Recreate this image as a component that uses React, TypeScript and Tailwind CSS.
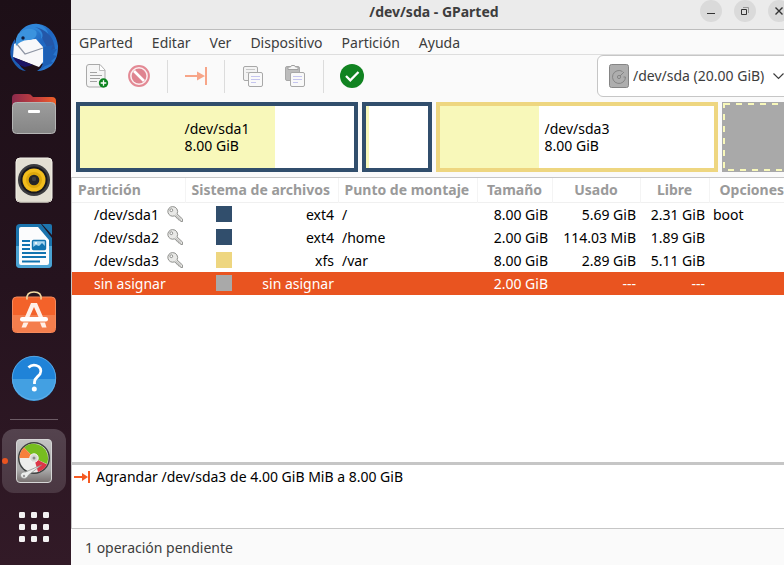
import React from "react";

/* ---------- Dock icons ---------- */

function ThunderbirdIcon() {
  return (
    <svg width="50" height="50" viewBox="0 0 50 50" aria-hidden="true">
      <defs>
        <linearGradient id="tb" x1="0" y1="0" x2="1" y2="1">
          <stop offset="0" stopColor="#3fa0e8" />
          <stop offset="0.5" stopColor="#1f66c0" />
          <stop offset="1" stopColor="#2c7fd6" />
        </linearGradient>
      </defs>
      <path d="M6 16C0 24 0 34 5 40c3 5 8 8 12 8-5-3-8-7-8-12z" fill="#1d5fb5" />
      <path
        d="M7 16C12 7 19 1 29 1c11 1 19 11 20 22 0 9-2 15-7 20-4 3-9 5-14 5 3-2 5-4 6-7L14 32 12 18z"
        fill="url(#tb)"
      />
      <path d="M29 1c-8-1-15 3-19 9 4-3 10-5 14-4 6 1 9 5 8 9l8 4c1-9-3-16-11-18z" fill="#2f86d9" />
      <path d="M26 4c10 2 19 9 20 22l-6 2-7-13c2-4-1-9-7-11z" fill="#2457a8" />
      <path d="M4 34l1-13 8-4 14-1 7 8v15l-4 5z" fill="#f8f8fa" />
      <path d="M4 34l20 8-8 2c-5-1-10-5-12-10z" fill="#1b1464" />
      <path d="M7 20l9 11 18-6" fill="none" stroke="#8f96a5" strokeWidth="1.2" />
      <path d="M9 11c5-5 13-7 18-3 2 4-1 8-6 9-5 0-10 1-14 6-1-4 0-8 2-12z" fill="#3b93de" />
      <path d="M35 24l9-2-2 5 6-1-4 6 4 1-6 5 2 2-8 3-5 4 4-8z" fill="#1d5fb5" />
      <circle cx="14" cy="15" r="1.7" fill="#111c3c" />
    </svg>
  );
}

function FilesIcon() {
  return (
    <svg width="46" height="42" viewBox="0 0 46 42" aria-hidden="true">
      <defs>
        <linearGradient id="fo" x1="0" x2="1">
          <stop offset="0" stopColor="#8b2a4c" />
          <stop offset="0.6" stopColor="#c9413c" />
          <stop offset="1" stopColor="#ee6127" />
        </linearGradient>
        <linearGradient id="fg" x1="0" y1="0" x2="0" y2="1">
          <stop offset="0" stopColor="#9d9d9d" />
          <stop offset="1" stopColor="#858585" />
        </linearGradient>
      </defs>
      <path d="M1 5q0-4 4-4h12q3 0 4 2l1 1h19q4 0 4 4v16H1z" fill="url(#fo)" />
      <rect x="1.5" y="9.5" width="43" height="31" rx="4" fill="url(#fg)" stroke="#b5b5b5" />
      <rect x="17" y="17" width="12" height="3" rx="1" fill="#fff" />
    </svg>
  );
}

function RhythmboxIcon() {
  return (
    <svg width="38" height="46" viewBox="0 0 38 46" aria-hidden="true">
      <rect x="1" y="1" width="36" height="44" rx="4" fill="#e3dfd3" stroke="#f4f2ea" />
      <path d="M2 43q1 2 4 2h26q3 0 4-2" fill="none" stroke="#c3bfb2" />
      <circle cx="19" cy="23" r="16" fill="#3c3c3f" />
      <circle cx="19" cy="23" r="13.5" fill="#17171d" />
      <circle cx="19" cy="23" r="11.5" fill="#f2bd1d" />
      <circle cx="19" cy="23" r="8" fill="#dda80c" />
      <circle cx="19" cy="23" r="5.3" fill="#252527" />
      <circle cx="19" cy="22" r="2.2" fill="#3e3e40" />
    </svg>
  );
}

function WriterIcon() {
  return (
    <svg width="38" height="46" viewBox="0 0 38 46" aria-hidden="true">
      <path d="M5 1h21l11 14v26q0 4-4 4H5q-4 0-4-4V5q0-4 4-4z" fill="#1b74ad" />
      <path d="M1 23h36v18q0 4-4 4H5q-4 0-4-4z" fill="#4ba3d3" />
      <path d="M6 4h17l11 13v23q0 2-2 2H6q-2 0-2-2V6q0-2 2-2z" fill="#fbfcfd" />
      <path d="M27 1h8q2 0 2 2v9z" fill="#1d75ae" />
      <path d="M7 18h8M7 22h8M7 26h8M7 30h24M7 34h24M7 38.5h18" stroke="#1274b0" strokeWidth="2" />
      <rect x="17.5" y="17.5" width="13" height="9" rx="1" fill="#a8d6f0" stroke="#1274b0" strokeWidth="1.4" />
      <path d="M18 26v-2l3-2 3 1 3-3 3 3v3z" fill="#1274b0" />
      <circle cx="21" cy="20" r="1" fill="#fff" />
    </svg>
  );
}

function SoftwareIcon() {
  return (
    <svg width="46" height="46" viewBox="0 0 46 46" aria-hidden="true">
      <rect x="1.5" y="8" width="43" height="35.5" rx="4" fill="#f3622a" stroke="#f58a5c" />
      <path d="M2 26h42v13q0 4-4 4H6q-4 0-4-4z" fill="#f47e4d" />
      <path d="M16 10.5q-1-7.500 7-7.500t7 7.500" fill="none" stroke="#f3dba3" strokeWidth="1.600" />
      <path d="M20 14h6l6 14h-4.500L23 18l-4.500 10H14z" fill="#fff0e8" />
      <rect x="9" y="28" width="28" height="4.500" rx="2.200" fill="#fff" />
      <path d="M12.500 33.500h5l-2.500 5h-4.500zM29 33.500h5l1.500 5h-4.500z" fill="#fff0e8" />
    </svg>
  );
}

function HelpIcon() {
  return (
    <svg width="46" height="46" viewBox="0 0 46 46" aria-hidden="true">
      <circle cx="23" cy="23" r="22" fill="#1f83d8" />
      <path d="M1 24a22 22 0 0 0 44 0z" fill="#43a0e2" />
      <circle cx="23" cy="23" r="21.7" fill="none" stroke="#65b1ea" strokeWidth="0.8" />
      <path
        d="M17.5 12.500c2-2 5-3 8-2 4 1.200 5.500 5 3.500 8.500-2 3-5.500 4-5.500 8v2"
        fill="none"
        stroke="#fff"
        strokeWidth="2.800"
      />
      <circle cx="23.300" cy="34" r="2.500" fill="#fff" />
    </svg>
  );
}

function GPartedIcon() {
  return (
    <svg width="38" height="46" viewBox="0 0 38 46" aria-hidden="true">
      <defs>
        <linearGradient id="gp" x1="0" y1="0" x2="0" y2="1">
          <stop offset="0" stopColor="#c4c4c4" />
          <stop offset="0.7" stopColor="#aaa" />
          <stop offset="1" stopColor="#77706f" />
        </linearGradient>
      </defs>
      <rect x="1.500" y="1.500" width="35" height="43" rx="3.500" fill="url(#gp)" stroke="#d6d6d6" />
      <circle cx="19" cy="20" r="16" fill="#3e4140" />
      <circle cx="19" cy="20" r="14.500" fill="#eeeeec" />
      <path d="M19 20L9 9.500A14.500 14.500 0 0 1 32 26z" fill="#77bd20" />
      <path d="M19 20L4.500 20A14.500 14.500 0 0 1 9 9.500z" fill="#f7803c" />
      <path d="M19 20l13 6.500a14.500 14.500 0 0 1-9 7.500z" fill="#dd3647" />
      <circle cx="19" cy="20" r="4.200" fill="#d6d8d4" stroke="#f6f6f6" />
      <circle cx="19" cy="20" r="1.500" fill="#888a85" />
      <path
        d="M5.500 37c1-3 3-3 5-3l16-7-13 10c-1 3-4 4-6 3-1-1-2-1-2-3z"
        fill="#eceeec"
        stroke="#8d8f8c"
        strokeWidth="0.700"
      />
      <circle cx="9" cy="38" r="1.200" fill="#999" />
    </svg>
  );
}

function GridIcon() {
  const steps = [0, 12, 24];
  return (
    <svg width="30" height="30" viewBox="0 0 30 30" aria-hidden="true">
      {steps.map((y) =>
        steps.map((x) => <rect key={`${x}-${y}`} x={x} y={y} width="6" height="6" rx="1.200" fill="#f3f1f2" />)
      )}
    </svg>
  );
}

/* ---------- Toolbar icons ---------- */

function NewIcon() {
  return (
    <svg width="24" height="26" viewBox="0 0 24 26" aria-hidden="true">
      <path d="M4 1.500h11l5 5.500v14q0 3-3 3H4q-2.500 0-2.500-3V4q0-2.500 2.500-2.500z" fill="#f5f5f5" stroke="#a9a9a9" />
      <path d="M14.500 2v5.500H20" fill="#fff" stroke="#bcbcbc" />
      <path d="M5 9.500h7M5 12.500h12M5 15.500h10M5 18.500h7" stroke="#a2a2a2" />
      <circle cx="18.500" cy="20" r="4.700" fill="#0e8420" />
      <path d="M18.500 17.200v5.600M15.700 20h5.600" stroke="#fff" strokeWidth="1.300" />
    </svg>
  );
}

function DeleteIcon() {
  return (
    <svg width="22" height="22" viewBox="0 0 22 22" aria-hidden="true">
      <circle cx="11" cy="11" r="9.900" fill="#fbeff0" stroke="#e38994" strokeWidth="2" />
      <circle cx="11" cy="11" r="7.400" fill="#df8490" />
      <path d="M6 6l10 10" stroke="#fff" strokeWidth="2.600" />
    </svg>
  );
}

function ResizeIcon({ small = false }: { small?: boolean }) {
  return small ? (
    <svg width="16" height="12" viewBox="0 0 16 12" aria-hidden="true">
      <path d="M0 5h8V2l6 4-6 4V7H0zM14 0h2v12h-2z" fill="#f55a22" />
    </svg>
  ) : (
    <svg width="22" height="18" viewBox="0 0 22 18" aria-hidden="true">
      <path d="M0 8h12V4.500L20 9l-8 4.500V10H0zM20 0h2v18h-2z" fill="#f7a588" />
    </svg>
  );
}

function CopyIcon({ paste = false }: { paste?: boolean }) {
  return (
    <svg width="22" height="24" viewBox="0 0 22 24" aria-hidden="true">
      <rect x="1.500" y="2.500" width="14" height="14" rx="1.500" fill={paste ? "#bcbcbc" : "#f3f3f3"} stroke="#a8a8a8" />
      {paste ? (
        <path d="M4 5V3h2.500l1-1.500h3l1 1.500H14v2.500H4z" fill="#f6f6f6" stroke="#a0a0a0" />
      ) : (
        <path d="M4 5.500h9M4 8.500h9" stroke="#c8c8c8" />
      )}
      <rect x="6.500" y="8.500" width="14" height="14" rx="1.500" fill="#f9f9f9" stroke="#a8a8a8" />
      <path d="M9 12.500h9M9 15.500h9M9 18.500h5" stroke="#c5c5ef" />
    </svg>
  );
}

function ApplyIcon() {
  return (
    <svg width="24" height="24" viewBox="0 0 24 24" aria-hidden="true">
      <circle cx="12" cy="12" r="12" fill="#118321" />
      <path d="M6 12l4.300 4.300L18.500 8" fill="none" stroke="#fff" strokeWidth="2.300" />
    </svg>
  );
}

function DiskIcon() {
  return (
    <svg width="20" height="24" viewBox="0 0 20 24" aria-hidden="true">
      <rect x="0.500" y="0.500" width="19" height="23" rx="2" fill="#aeaeae" stroke="#858585" />
      <path d="M13.500 7.500A6.500 6.500 0 1 0 16.500 13h-2" fill="none" stroke="#858585" />
      <circle cx="10" cy="13" r="1.600" fill="none" stroke="#858585" />
      <path d="M11 12l4-4" stroke="#858585" />
    </svg>
  );
}

function KeyIcon() {
  return (
    <svg width="16" height="16" viewBox="0 0 16 16" aria-hidden="true" className="shrink-0">
      <path
        d="M5.500.6a4.800 4.800 0 1 0 1.800 9.300l1.700.6.500 1.500 1.600.3.300 1.500 1.600.3.700 1.300 1.900.1v-2.400l-5.600-5.200A4.900 4.900 0 0 0 5.500.6z"
        fill="#e9e9e7"
        stroke="#8e8f8c"
        strokeWidth="1"
      />
      <circle cx="4.300" cy="4.200" r="1.400" fill="#fff" stroke="#8e8f8c" />
      <path d="M8.500 8.500l5.500 5" stroke="#b5b5b3" strokeWidth="0.800" />
    </svg>
  );
}

/* ---------- Data ---------- */

const dockApps = [
  { name: "Thunderbird", icon: <ThunderbirdIcon /> },
  { name: "Archivos", icon: <FilesIcon /> },
  { name: "Rhythmbox", icon: <RhythmboxIcon /> },
  { name: "LibreOffice Writer", icon: <WriterIcon /> },
  { name: "Ubuntu Software", icon: <SoftwareIcon /> },
  { name: "Ayuda", icon: <HelpIcon /> },
];

const menus = ["GParted", "Editar", "Ver", "Dispositivo", "Partición", "Ayuda"];

const rows = [
  { name: "/dev/sda1", key: true, color: "bg-[#314e6c]", fs: "ext4", mount: "/", size: "8.00 GiB", used: "5.69 GiB", free: "2.31 GiB", flags: "boot" },
  { name: "/dev/sda2", key: true, color: "bg-[#314e6c]", fs: "ext4", mount: "/home", size: "2.00 GiB", used: "114.03 MiB", free: "1.89 GiB", flags: "" },
  { name: "/dev/sda3", key: true, color: "bg-[#eed680]", fs: "xfs", mount: "/var", size: "8.00 GiB", used: "2.89 GiB", free: "5.11 GiB", flags: "" },
  { name: "sin asignar", key: false, color: "bg-[#a9a9a9]", fs: "sin asignar", mount: "", size: "2.00 GiB", used: "---", free: "---", flags: "", selected: true },
];

const headers = [
  { label: "Partición", align: "px-1.5 text-left" },
  { label: "Sistema de archivos", align: "px-1.5 text-left" },
  { label: "Punto de montaje", align: "px-1.5 text-left" },
  { label: "Tamaño", align: "px-1.5 text-center" },
  { label: "Usado", align: "px-1.5 text-center" },
  { label: "Libre", align: "px-1.5 text-center" },
  { label: "Opciones", align: "px-2.5 text-left" },
];

/* ---------- Parts ---------- */

function Dock() {
  return (
    <nav aria-label="Dock" className="flex w-[71px] shrink-0 flex-col gap-0.5 bg-linear-to-b from-[#1d0f17] via-[#25131e] to-[#321a27] pt-4 pl-0.5">
      {dockApps.map((app) => (
        <button key={app.name} aria-label={app.name} className="flex h-16 w-16 shrink-0 items-center justify-center">
          {app.icon}
        </button>
      ))}
      <hr className="mx-2 my-[7px] w-12 border-[#6d5c66]" />
      <button aria-label="GParted" className="relative flex h-16 w-16 shrink-0 items-center justify-center rounded-xl bg-linear-to-b from-[#54434e] to-[#4a3742]">
        <span className="absolute top-[29px] left-0 h-1.5 w-1.5 rounded-full bg-[#e95420]" />
        <GPartedIcon />
      </button>
      <button aria-label="Mostrar aplicaciones" className="flex h-16 w-16 shrink-0 items-center justify-center">
        <GridIcon />
      </button>
    </nav>
  );
}

function TitleBar() {
  const button = "flex h-[22px] w-[22px] items-center justify-center rounded-full bg-[#dadada] text-[#333]";
  return (
    <header className="grid h-[30px] shrink-0 grid-cols-[1fr_auto_1fr] border-b border-[#bdbdbd] bg-[#ebebeb]">
      <h1 className="col-start-2 text-sm leading-6 font-bold text-[#3d3d3d]">/dev/sda - GParted</h1>
      <div className="flex justify-end gap-3 pr-[7px]">
        <button aria-label="Minimizar" className={button}>
          <svg width="8" height="8" viewBox="0 0 8 8"><path d="M0 6.500h8" stroke="currentColor" /></svg>
        </button>
        <button aria-label="Restaurar" className={button}>
          <svg width="8" height="8" viewBox="0 0 8 8" fill="none">
            <path d="M0.500 2.500h5v5h-5z" stroke="currentColor" />
            <path d="M2 .5h5.500V6" stroke="#999" />
          </svg>
        </button>
        <button aria-label="Cerrar" className={button}>
          <svg width="8" height="8" viewBox="0 0 8 8"><path d="M0.500 0.500l7 7M7.500.5l-7 7" stroke="currentColor" strokeWidth="1.400" /></svg>
        </button>
      </div>
    </header>
  );
}

function Toolbar() {
  const button = "flex h-[42px] w-[42px] items-center justify-center";
  const separator = "mx-[7px] h-[33px] w-px bg-[#dcdcdc]";
  return (
    <div className="flex h-[43px] shrink-0 items-start px-[5px]">
      <div className="flex items-center">
        <button aria-label="Nueva" className={button}><NewIcon /></button>
        <button aria-label="Borrar" className={button}><DeleteIcon /></button>
        <span className={separator} />
        <button aria-label="Redimensionar" className={button}><ResizeIcon /></button>
        <span className={separator} />
        <button aria-label="Copiar" className={button}><CopyIcon /></button>
        <button aria-label="Pegar" className={button}><CopyIcon paste /></button>
        <span className={separator} />
        <button aria-label="Aplicar" className={button}><ApplyIcon /></button>
      </div>
      <div className="relative ml-auto w-[195px]">
        <span className="pointer-events-none absolute top-[9px] left-[12px]"><DiskIcon /></span>
        <select aria-label="Dispositivo" className="h-[42px] w-full appearance-none rounded-md border border-[#c6c6c6] bg-white pl-[35px] text-sm text-[#3d3d3d]">
          <option>/dev/sda (20.00 GiB)</option>
        </select>
        <svg className="pointer-events-none absolute top-[18px] right-[8px]" width="11" height="7" viewBox="0 0 11 7" fill="none" aria-hidden="true">
          <path d="M0.500 0.500l5 5 5-5" stroke="#3d3d3d" strokeWidth="1.200" />
        </svg>
      </div>
    </div>
  );
}

function DiskBlock({ border, fill, name }: { border: string; fill: string; name?: string }) {
  return (
    <div className={`grid border-4 bg-white ${border}`}>
      <div className={`col-start-1 row-start-1 bg-[#f8f8ba] ${fill}`} />
      {name && (
        <p className="col-start-1 row-start-1 place-self-center text-sm leading-[17px] text-black">
          {name}
          <br />
          8.00 GiB
        </p>
      )}
    </div>
  );
}

function DiskMap() {
  return (
    <div className="grid h-[79px] shrink-0 grid-cols-[282fr_70fr_282fr_70fr] gap-1 px-[5px] pt-1 pb-[5px]">
      <DiskBlock border="border-[#314e6c]" fill="w-[71%]" name="/dev/sda1" />
      <DiskBlock border="border-[#314e6c]" fill="w-[5%]" />
      <DiskBlock border="border-[#eed680]" fill="w-[36%]" name="/dev/sda3" />
      <svg className="h-full w-full bg-[#a9a9a9]" aria-label="sin asignar">
        <rect x="2" y="2" width="68" height="66" fill="none" stroke="#f8f8ba" strokeWidth="2" strokeDasharray="6 6" />
      </svg>
    </div>
  );
}

function PartitionTable() {
  return (
    <div className="min-h-0 flex-1 overflow-hidden border-t border-l border-[#c6c6c6] bg-white">
      <table className="w-full table-fixed border-collapse text-sm whitespace-nowrap">
        <colgroup>
          <col className="w-[113px]" />
          <col className="w-[153px]" />
          <col className="w-[139px]" />
          <col className="w-[75px]" />
          <col className="w-[88px]" />
          <col className="w-[69px]" />
          <col />
        </colgroup>
        <thead>
          <tr className="h-6 border-b border-[#f0f0f0] text-[#9a9a9a]">
            {headers.map((h) => (
              <th key={h.label} className={`border-r border-[#f4f4f4] py-0 leading-[23px] font-bold ${h.align}`}>
                {h.label}
              </th>
            ))}
          </tr>
        </thead>
        <tbody>
          {rows.map((r) => (
            <tr key={r.name} className={`h-[23px] leading-[23px] ${r.selected ? "bg-[#e95420] text-white" : "text-black"}`}>
              <td className="py-0 pr-0 pl-[22px]">
                <span className="flex h-[23px] items-center gap-2">
                  {r.name}
                  {r.key && <KeyIcon />}
                </span>
              </td>
              <td className="py-0 pr-1 pl-[31px]">
                <span className="flex h-[23px] items-center justify-between">
                  <span className={`h-4 w-4 ${r.color}`} />
                  {r.fs}
                </span>
              </td>
              <td className="px-1 py-0">{r.mount}</td>
              <td className="px-1 py-0 text-right">{r.size}</td>
              <td className="px-1 py-0 text-right">{r.used}</td>
              <td className="px-1 py-0 text-right">{r.free}</td>
              <td className="px-1 py-0">{r.flags}</td>
            </tr>
          ))}
        </tbody>
      </table>
    </div>
  );
}

export default function App() {
  return (
    <div className="flex h-screen overflow-hidden bg-[#fafafa] font-['Noto_Sans',sans-serif]">
      <Dock />
      <main className="-mr-[13px] flex min-w-0 flex-1 flex-col">
        <TitleBar />
        <nav aria-label="Menú" className="flex h-[25px] shrink-0 gap-[3px] border-b border-[#dedede] pt-px text-sm text-[#3d3d3d]">
          {menus.map((m) => (
            <button key={m} className="px-2 leading-6">
              {m}
            </button>
          ))}
        </nav>
        <Toolbar />
        <DiskMap />
        <PartitionTable />
        <div className="h-[3px] shrink-0 bg-[#c6c6c6]" />
        <ul className="h-16 shrink-0 border-b border-l border-[#c6c6c6] bg-white px-0.5 text-sm text-black">
          <li className="flex h-6 items-center gap-1.5">
            <ResizeIcon small />
            Agrandar /dev/sda3 de 4.00 GiB MiB a 8.00 GiB
          </li>
        </ul>
        <footer className="flex h-9 shrink-0 items-center px-3.5 pt-0.5 text-sm text-[#3d3d3d]">1 operación pendiente</footer>
      </main>
    </div>
  );
}
